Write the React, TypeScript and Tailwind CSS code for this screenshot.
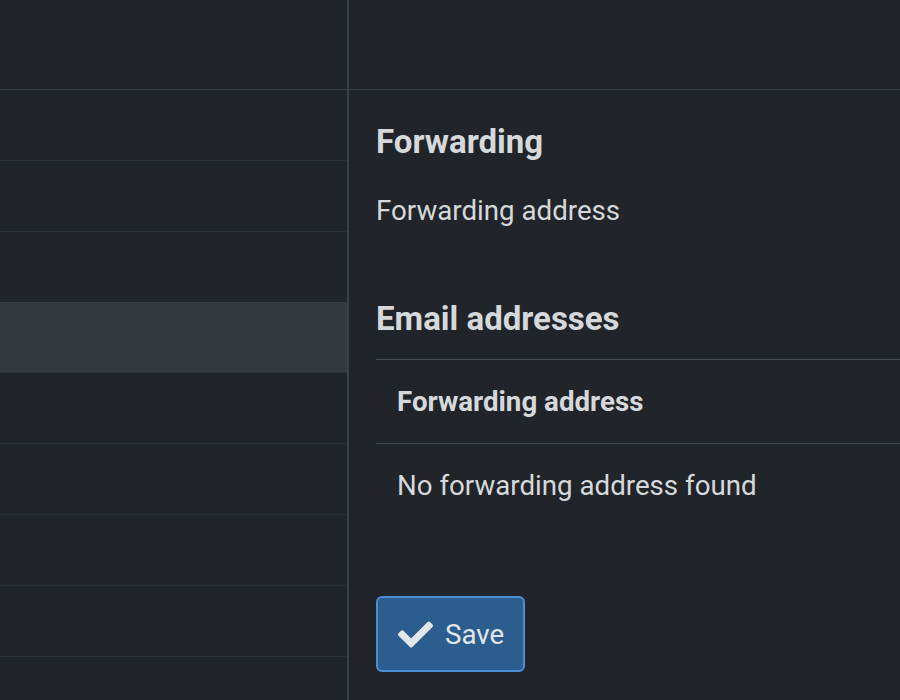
import React from 'react';
import { FaCheck } from 'react-icons/fa';

const rows = [false, false, false, true, false, false, false, false, false];

const App: React.FC = () => {
  return (
    <div
      className="flex h-[700px] w-[900px] overflow-hidden bg-[#212529] text-[#d5d9dc]"
      style={{ fontFamily: 'Roboto, "Noto Sans", sans-serif' }}
    >
      {/* list column */}
      <div className="flex w-[349px] shrink-0 flex-col border-r-2 border-[#3a4147]">
        <div className="h-[90px] shrink-0 border-b border-[#3a4147]" />
        {rows.map((selected, i) => (
          <div
            key={i}
            className={
              (i === 0 ? 'h-[70px] ' : selected ? 'h-[70px] border-t ' : 'h-[71px] border-t ') +
              'shrink-0 ' +
              (selected ? 'border-[#343a40] bg-[#343a40]' : 'border-[#2b3035]')
            }
          />
        ))}
      </div>

      {/* detail column */}
      <div className="flex min-w-0 flex-1 flex-col">
        <div className="h-[90px] shrink-0 border-b border-[#3a4147]" />
        <div className="pl-[27px]">
          <h5 className="mt-[35px] text-[33px] font-bold leading-[33px]">Forwarding</h5>
          <p className="mt-[39px] text-[27.7px] leading-[27px]">Forwarding address</p>

          <h5 className="mt-[78px] text-[33px] font-bold leading-[33px]">Email addresses</h5>
          <div className="mt-[24px] border-t border-[#444c53]">
            <div className="border-b border-[#444c53] py-[28px] pl-[21px] text-[27.7px] font-bold leading-[27px]">
              Forwarding address
            </div>
            <div className="py-[28px] pl-[21px] text-[27.7px] leading-[27px]">
              No forwarding address found
            </div>
          </div>

          <button
            type="button"
            className="mt-[69px] flex h-[76px] w-[149px] items-center gap-[12px] rounded-[6px] border-2 border-[#4a8fd8] bg-[#2b5d8f] pl-[20px] text-[27.7px] leading-[27px] text-[#e2e6e9]"
          >
            <FaCheck size={35} />
            <span>Save</span>
          </button>
        </div>
      </div>
    </div>
  );
};

export default App;
